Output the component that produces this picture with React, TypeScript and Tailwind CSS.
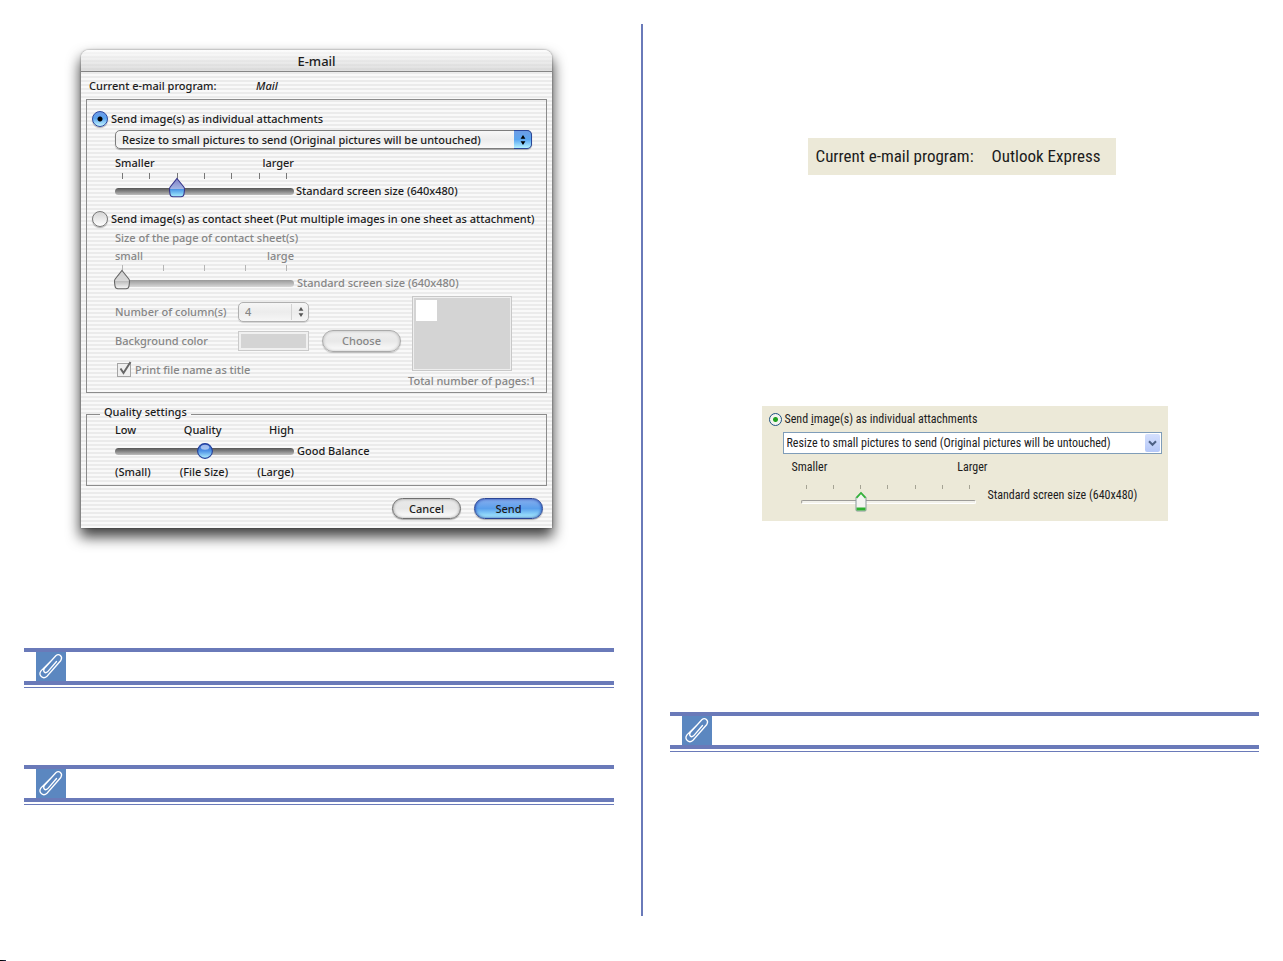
import { useState, type ReactNode } from "react";
import clsx from "clsx";

type SliderProps = {
  label: string;
  steps: number;
  initial: number;
  look: "aqua" | "muted" | "round" | "luna";
};

const trackLook = {
  aqua: "[&::-webkit-slider-runnable-track]:h-[7px] [&::-webkit-slider-runnable-track]:rounded-full [&::-webkit-slider-runnable-track]:bg-linear-to-b [&::-webkit-slider-runnable-track]:from-[#555555] [&::-webkit-slider-runnable-track]:to-[#bdbdbd]",
  round:
    "[&::-webkit-slider-runnable-track]:h-[7px] [&::-webkit-slider-runnable-track]:rounded-full [&::-webkit-slider-runnable-track]:bg-linear-to-b [&::-webkit-slider-runnable-track]:from-[#555555] [&::-webkit-slider-runnable-track]:to-[#bdbdbd]",
  muted:
    "[&::-webkit-slider-runnable-track]:h-[7px] [&::-webkit-slider-runnable-track]:rounded-full [&::-webkit-slider-runnable-track]:bg-linear-to-b [&::-webkit-slider-runnable-track]:from-[#999999] [&::-webkit-slider-runnable-track]:to-[#d8d8d8]",
  luna: "[&::-webkit-slider-runnable-track]:h-1 [&::-webkit-slider-runnable-track]:rounded-xs [&::-webkit-slider-runnable-track]:border [&::-webkit-slider-runnable-track]:border-t-[#9d9c99] [&::-webkit-slider-runnable-track]:border-l-[#9d9c99] [&::-webkit-slider-runnable-track]:border-r-white [&::-webkit-slider-runnable-track]:border-b-white [&::-webkit-slider-runnable-track]:bg-[#f2f1ea]",
};

function Thumb({ look }: { look: SliderProps["look"] }) {
  if (look === "round") {
    return (
      <svg width="18" height="18" viewBox="0 0 18 18" aria-hidden="true">
        <defs>
          <linearGradient id="ball" x1="0" y1="0" x2="0" y2="1">
            <stop offset="0" stopColor="#2f55c4" />
            <stop offset="0.5" stopColor="#4f93e6" />
            <stop offset="1" stopColor="#b4f3ff" />
          </linearGradient>
        </defs>
        <circle cx="9" cy="9" r="7.4" fill="url(#ball)" stroke="#24409a" strokeWidth="1.1" />
        <ellipse cx="9" cy="5.3" rx="4.2" ry="2.500" fill="#e6f1ff" opacity="0.6" />
      </svg>
    );
  }
  if (look === "luna") {
    return (
      <svg width="12" height="21" viewBox="0 0 12 21" aria-hidden="true">
        <path d="M1 6.5 6 1.5l5 5V19q0 1-1 1H2q-1 0-1-1Z" fill="#f4f4f1" stroke="#8a9a9c" />
        <path d="M1.5 6.8 6 2l4.500 4.800" fill="none" stroke="#35b53a" strokeWidth="1.800" />
        <path d="M1.500 16.500h9V19q0 .5-.5.5H2q-.5 0-.5-.5Z" fill="#2db02f" />
      </svg>
    );
  }
  const aqua = look === "aqua";
  return (
    <svg width="18" height="22" viewBox="0 0 18 22" aria-hidden="true">
      <defs>
        <linearGradient id={`tip-${look}`} x1="0" y1="0" x2="0" y2="1">
          <stop offset="0" stopColor={aqua ? "#7f7fc4" : "#cfcfcf"} />
          <stop offset="0.55" stopColor={aqua ? "#a3b4e2" : "#d8d8d8"} />
          <stop offset="0.6" stopColor={aqua ? "#4a97e6" : "#bebebe"} />
          <stop offset="1" stopColor={aqua ? "#a8f0ff" : "#fafafa"} />
        </linearGradient>
      </defs>
      <path
        d="M9 1.500 16 10.200q.6 1 .5 3L16 17q-.4 2.800-3 2.800H5Q2.400 19.800 2 17l-.5-3.800q-.1-2 .5-3Z"
        fill={`url(#tip-${look})`}
        stroke={aqua ? "#37378c" : "#666666"}
        strokeWidth="1.100"
      />
    </svg>
  );
}

function Slider({ label, steps, initial, look }: SliderProps) {
  const [value, setValue] = useState(initial);
  const luna = look === "luna";
  return (
    <div className={clsx("relative flex items-center", luna ? "h-6 w-[175px]" : "h-5 w-[179px]")}>
      <input
        type="range"
        aria-label={label}
        min={0}
        max={steps}
        value={value}
        disabled={look === "muted"}
        onChange={(e) => setValue(Number(e.target.value))}
        className={clsx(
          "block w-full appearance-none bg-transparent [&::-webkit-slider-thumb]:size-3 [&::-webkit-slider-thumb]:appearance-none [&::-webkit-slider-thumb]:opacity-0",
          trackLook[look],
        )}
      />
      <span
        className={clsx(
          "pointer-events-none absolute inset-y-0",
          luna ? "inset-x-[5px]" : "inset-x-[7px]",
        )}
      >
        <span
          className={clsx(
            "absolute -translate-x-1/2",
            look === "round" || luna ? "top-px" : "-top-1",
          )}
          style={{ left: `${(value / steps) * 100}%` }}
        >
          <Thumb look={look} />
        </span>
      </span>
    </div>
  );
}

function Ticks({ count, className }: { count: number; className: string }) {
  return (
    <div className={clsx("flex justify-between", className)} aria-hidden="true">
      {Array.from({ length: count }, (_, i) => (
        <span key={i} className="h-full w-px bg-current" />
      ))}
    </div>
  );
}

function UpDown({ className }: { className: string }) {
  return (
    <svg width="6" height="10" viewBox="0 0 6 10" className={className} aria-hidden="true">
      <path d="M3 0 5.400 3.700H.6ZM3 10 5.400 6.300H.6Z" fill="currentColor" />
    </svg>
  );
}

function MacRadio({ id, children, checked }: { id: string; children: ReactNode; checked?: boolean }) {
  return (
    <div className="flex h-5 items-center gap-[3px] pl-[5px]">
      <input
        id={id}
        type="radio"
        name="mac-mode"
        defaultChecked={checked}
        className="size-4 shrink-0 appearance-none rounded-full border border-[#777777] bg-linear-to-b from-[#d5d5d5] to-white shadow-[0_1px_1px_rgba(0,0,0,0.3)] checked:border-[#2b479e] checked:bg-[radial-gradient(circle,#000_0_2px,transparent_3px),linear-gradient(#6f9be6,#5aa3ee_45%,#c4f6ff)]"
      />
      <label htmlFor={id} className="whitespace-nowrap">
        {children}
      </label>
    </div>
  );
}

function MacDialog() {
  return (
    <section
      aria-label="E-mail"
      className="ml-[57px] mt-[26px] max-w-[471px] rounded-t-lg bg-[repeating-linear-gradient(#f9f9f9_0_2px,#ebebeb_2px_4px)] font-['Noto_Sans','Open_Sans',sans-serif] text-[11px] font-medium leading-4 text-[#1c1c1c] shadow-[0_8px_14px_1px_rgba(0,0,0,0.75),0_0_2px_rgba(0,0,0,0.5)]"
    >
      <header className="flex h-[22px] items-center justify-center rounded-t-lg border-b border-[#858585] bg-linear-to-b from-white/60 to-[#cccccc]/60 text-[13px]">
        <h1>E-mail</h1>
      </header>
      <div className="px-[5px] pb-[9px]">
        <p className="flex h-[27px] items-center pl-[3px]">
          <span className="w-[167px]">Current e-mail program:</span>
          <em>Mail</em>
        </p>
        <div className="border border-[#8c8c8c] pb-px pt-[9px]">
          <MacRadio id="mac-individual" checked>
            Send image(s) as individual attachments
          </MacRadio>
          <div className="pl-7 pr-[14px]">
            <div className="relative mt-px flex">
              <select
                aria-label="Resize option"
                className="h-[19px] w-full appearance-none rounded-[5px] border border-[#7d7d7d] bg-linear-to-b from-[#f7f7f7] via-[#ececec] to-[#fafafa] pl-1.5 shadow-[0_1px_1px_rgba(0,0,0,0.3)]"
              >
                <option>Resize to small pictures to send (Original pictures will be untouched)</option>
              </select>
              <span className="pointer-events-none absolute inset-y-0 right-0 flex w-[18px] items-center justify-center rounded-r-[5px] border border-l-0 border-[#2a4799] bg-linear-to-b from-[#6c9ce5] via-[#5aa5f0] to-[#b4f2ff]">
                <UpDown className="text-black" />
              </span>
            </div>
            <div className="mt-1 flex h-5 w-[179px] items-center justify-between">
              <span>Smaller</span>
              <span>larger</span>
            </div>
            <Ticks count={7} className="h-[6px] w-[179px] px-[7px] text-[#777777]" />
            <div className="mt-0.5 flex items-center gap-0.5">
              <Slider label="Picture size" steps={6} initial={2} look="aqua" />
              <span className="whitespace-nowrap">Standard screen size (640x480)</span>
            </div>
          </div>
          <div className="mt-2">
            <MacRadio id="mac-contact">
              Send image(s) as contact sheet (Put multiple images in one sheet as attachment)
            </MacRadio>
          </div>
          <div className="pl-7 text-[#868686]">
            <p className="flex h-[18px] items-center">Size of the page of contact sheet(s)</p>
            <div className="flex h-[18px] w-[179px] items-center justify-between">
              <span>small</span>
              <span>large</span>
            </div>
            <Ticks count={5} className="h-[6px] w-[179px] px-[7px] text-[#b5b5b5]" />
            <div className="mt-0.5 flex items-center gap-[3px]">
              <Slider label="Page size" steps={4} initial={0} look="muted" />
              <span className="whitespace-nowrap">Standard screen size (640x480)</span>
            </div>
            <div className="mt-[3px] flex gap-[7px]">
              <div className="flex w-[286px] flex-col gap-[7px] pt-[5px]">
                <div className="flex h-[22px] items-center">
                  <label htmlFor="columns" className="w-[123px]">
                    Number of column(s)
                  </label>
                  <span className="relative flex">
                    <select
                      id="columns"
                      disabled
                      className="h-5 w-[71px] appearance-none rounded-[5px] border border-[#b0b0b0] bg-linear-to-b from-[#f6f6f6] via-[#ececec] to-[#f6f6f6] pl-1.5 opacity-100 shadow-[0_1px_1px_rgba(0,0,0,0.15)]"
                    >
                      <option>4</option>
                    </select>
                    <span className="pointer-events-none absolute inset-y-0.5 right-0 flex w-[18px] items-center justify-center border-l border-[#d2d2d2]">
                      <UpDown className="text-[#555555]" />
                    </span>
                  </span>
                </div>
                <div className="flex h-[22px] items-center">
                  <span className="w-[123px]">Background color</span>
                  <span className="h-5 w-[71px] border border-[#cacaca] bg-[#d4d4d4] ring-2 ring-[#f0f0f0] ring-inset" />
                  <button
                    disabled
                    className="ml-auto h-[22px] w-[79px] rounded-full border border-[#aaaaaa] bg-linear-to-b from-[#efefef] via-[#e8e8e8] to-[#fcfcfc] shadow-[inset_0_0_3px_rgba(0,0,0,0.25),0_1px_1px_rgba(0,0,0,0.2)]"
                  >
                    Choose
                  </button>
                </div>
                <div className="flex h-[22px] items-center pl-0.5">
                  <span className="relative flex">
                    <input
                      id="print-name"
                      type="checkbox"
                      defaultChecked
                      disabled
                      className="size-[14px] appearance-none border border-[#a5a5a5] bg-[#efefef]"
                    />
                    <svg
                      width="16"
                      height="16"
                      viewBox="0 0 16 16"
                      className="pointer-events-none absolute -top-0.5 left-0"
                      aria-hidden="true"
                    >
                      <path d="M3.500 7.500 6.500 12 13.500 1" fill="none" stroke="#666666" strokeWidth="2" />
                    </svg>
                  </span>
                  <label htmlFor="print-name" className="pl-1">
                    Print file name as title
                  </label>
                </div>
              </div>
              <div>
                <div className="ml-1 h-[75px] w-[100px] border border-[#c8c8c8] bg-[#eeeeee] p-px">
                  <div className="size-full bg-[#d4d4d4] p-0.5">
                    <div className="size-[21px] bg-white" />
                  </div>
                </div>
                <p className="flex h-5 items-center whitespace-nowrap">Total number of pages:1</p>
              </div>
            </div>
          </div>
        </div>
        <fieldset className="mt-[11px] border border-[#8c8c8c] pb-[7px] pl-7">
          <legend className="-ml-[15px] px-1 pb-1">Quality settings</legend>
          <div className="flex w-[179px] justify-between leading-3">
            <span>Low</span>
            <span>Quality</span>
            <span>High</span>
          </div>
          <div className="my-[5px] flex items-center gap-[3px]">
            <Slider label="Quality" steps={4} initial={2} look="round" />
            <span>Good Balance</span>
          </div>
          <div className="flex w-[179px] justify-between leading-3">
            <span>(Small)</span>
            <span>(File Size)</span>
            <span>(Large)</span>
          </div>
        </fieldset>
        <div className="mt-3 flex justify-end gap-[13px] pr-1">
          <button className="h-[21px] w-[69px] rounded-full border border-[#6e6e6e] bg-linear-to-b from-[#e9e9e9] via-[#e6e6e6] to-white shadow-[inset_0_0_3px_rgba(0,0,0,0.4),0_1px_1px_rgba(0,0,0,0.3)]">
            Cancel
          </button>
          <button className="h-[21px] w-[69px] rounded-full border border-[#2a4595] bg-linear-to-b from-[#86aeee] via-[#5a9fec] to-[#aef3ff] shadow-[inset_0_0_3px_rgba(0,20,140,0.8),0_1px_1px_rgba(0,0,0,0.3)]">
            Send
          </button>
        </div>
      </div>
    </section>
  );
}

function Note({ className }: { className: string }) {
  return (
    <div className={className}>
      <div className="border-y-4 border-[#6a7ab9] pl-3">
        <div className="flex h-[29px] w-[30px] items-center justify-center bg-[#5b87c0]">
          <svg width="30" height="29" viewBox="0 0 30 29" fill="none" aria-hidden="true">
            <path
              d="M16 8 5 18.800C2 23 6.800 28 11 24.300L24.800 8.500C27.200 4.500 23 1 19.800 3.800L8.500 16.200C6.400 19.400 9 22 11.600 19.800L20.500 9.500"
              stroke="white"
              strokeWidth="1.300"
              strokeLinecap="round"
            />
          </svg>
        </div>
      </div>
      <div className="mt-0.5 h-px bg-[#6a7ab9]" />
    </div>
  );
}

function WindowsPanel() {
  return (
    <section className="ml-[92px] mt-[231px] h-[115px] max-w-[406px] bg-[#ece9d8] pl-[7px] pr-1.5 pt-1 text-xs text-[#1c1c1c]">
      <div className="flex h-[18px] items-center gap-[3px]">
        <input
          id="win-individual"
          type="radio"
          name="win-mode"
          defaultChecked
          className="size-[13px] appearance-none rounded-full border border-[#1f5280] bg-[radial-gradient(circle,#21a121_0_2px,#f4f4f0_3px)]"
        />
        <label htmlFor="win-individual">
          Send <u>i</u>mage(s) as individual attachments
        </label>
      </div>
      <div className="relative ml-[14px] mt-1 flex">
        <select
          aria-label="Resize option"
          className="h-[22px] w-full appearance-none border border-[#7f9db9] bg-white pl-[3px]"
        >
          <option>Resize to small pictures to send (Original pictures will be untouched)</option>
        </select>
        <span className="pointer-events-none absolute inset-y-0.5 right-0.5 flex w-[15px] items-center justify-center rounded-xs bg-linear-to-b from-[#d5e0fd] to-[#b5c8f8]">
          <svg width="9" height="7" viewBox="0 0 9 7" aria-hidden="true">
            <path d="m1 1.300 3.500 3.500L8 1.300" fill="none" stroke="#4d6185" strokeWidth="2" />
          </svg>
        </span>
      </div>
      <div className="mt-1 flex h-[18px] w-[219px] items-center justify-between pl-[23px]">
        <span>Smaller</span>
        <span>Larger</span>
      </div>
      <div className="flex items-center gap-3 pl-8">
        <div className="pt-[9px]">
          <Ticks count={7} className="h-1 px-[5px] text-[#a5a394]" />
          <div className="mt-px">
            <Slider label="Picture size" steps={6} initial={2} look="luna" />
          </div>
        </div>
        <span className="whitespace-nowrap">Standard screen size (640x480)</span>
      </div>
    </section>
  );
}

export default function App() {
  return (
    <div className="flex min-h-screen flex-col bg-white">
      <main className="flex flex-1 gap-[27px] px-6 pt-6">
        <div className="min-w-0 flex-1">
          <MacDialog />
          <Note className="mt-[120px]" />
          <Note className="mt-[77px]" />
        </div>
        <div className="w-0.5 bg-[#6a7ab9]" />
        <div className="min-w-0 flex-1 font-['Liberation_Sans_Narrow','Roboto_Condensed','Lato',sans-serif]">
          <p className="ml-[138px] mt-[114px] flex h-[37px] max-w-[308px] items-center gap-[18px] whitespace-nowrap bg-[#ece9d8] pl-2 text-[17px] text-[#1c1c1c]">
            <span>Current e-mail program:</span>
            <span>Outlook Express</span>
          </p>
          <WindowsPanel />
          <Note className="mt-[191px]" />
        </div>
      </main>
      <footer className="pt-11">
        <div className="h-px w-1.5 bg-linear-to-r from-black to-[#2b3a5a]" />
      </footer>
    </div>
  );
}
